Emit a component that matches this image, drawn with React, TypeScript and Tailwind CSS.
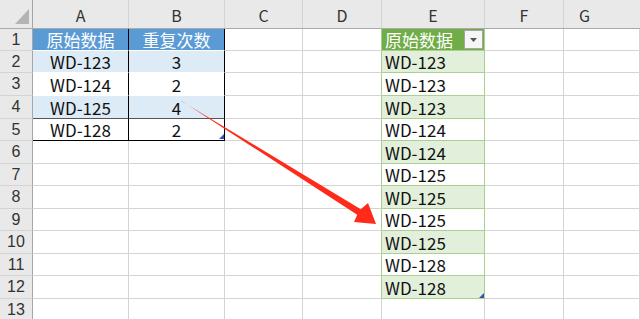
import type { ReactNode } from "react";

type Cell = {
  w: string;
  bg?: string;
  br: string;
  bb: string;
  align?: string;
  text?: string;
  children?: ReactNode;
};

const ROW_H = [
  "h-[22px]", "h-[22px]", "h-[23px]", "h-[23px]", "h-[22px]", "h-[23px]",
  "h-[22px]", "h-[23px]", "h-[22px]", "h-[23px]", "h-[22px]", "h-[23px]", "h-[22px]",
];

const GRID = "border-r-[#d4d4d4]";
const GRID_B = "border-b-[#d4d4d4]";

const summary: [string, string][] = [
  ["原始数据", "重复次数"],
  ["WD-123", "3"],
  ["WD-124", "2"],
  ["WD-125", "4"],
  ["WD-128", "2"],
];

const source = [
  "WD-123", "WD-123", "WD-123", "WD-124", "WD-124", "WD-125",
  "WD-125", "WD-125", "WD-125", "WD-128", "WD-128",
];

function GridCell({ w, bg = "bg-white", br, bb, align = "justify-center", text = "text-[#111]", children }: Cell) {
  return (
    <div className={`${w} ${bg} ${br} ${bb} ${align} ${text} shrink-0 border-r border-b flex items-center leading-none text-[17px] overflow-hidden whitespace-nowrap`}>
      {children}
    </div>
  );
}

function FilterButton() {
  return (
    <div className="ml-auto mr-[1px] w-[19px] h-[19px] bg-[#f6f6f6] border border-[#a6a6a6] flex items-center justify-center">
      <svg width="7" height="4" viewBox="0 0 7 4">
        <path d="M0 0h7L3.5 4z" fill="#555" />
      </svg>
    </div>
  );
}

function SheetRow({ r }: { r: number }) {
  const inTable = r <= 5;
  const inList = r <= 12;
  const green = r === 1 ? "bg-[#70ad47]" : r % 2 === 0 ? "bg-[#e2efda]" : "bg-white";
  const blue = r === 1 ? "bg-[#5b9bd5]" : r % 2 === 0 ? "bg-[#ddebf7]" : "bg-white";
  const tableBottom = r === 5 ? "border-b-black" : r === 4 ? "border-b-[#555]" : "border-b-white";
  const head = r === 1 ? "text-white" : "text-[#111]";

  return (
    <div className={`${ROW_H[r - 1]} flex`}>
      <div className="w-[33px] shrink-0 bg-[#e9e9e9] border-r border-b border-r-[#a6a6a6] border-b-[#d4d4d4] flex items-center justify-center text-[16px] leading-none text-[#333] font-['Liberation_Sans',sans-serif]">
        {r}
      </div>
      {inTable ? (
        <>
          <GridCell w="w-[96px]" bg={blue} br="border-r-black" bb={tableBottom} text={head}>
            {summary[r - 1][0]}
          </GridCell>
          <GridCell w="w-[96px]" bg={blue} br="border-r-black" bb={tableBottom} text={head}>
            {summary[r - 1][1]}
          </GridCell>
        </>
      ) : (
        <>
          <GridCell w="w-[96px]" br={GRID} bb={GRID_B} />
          <GridCell w="w-[96px]" br={GRID} bb={GRID_B} />
        </>
      )}
      <GridCell w="w-[78px]" br={GRID} bb={GRID_B} />
      <GridCell w="w-[79px]" br={inList ? "border-r-[#a9d08e]" : GRID} bb={GRID_B} />
      {inList ? (
        <GridCell
          w="w-[103px]"
          bg={green}
          br="border-r-[#a9d08e]"
          bb="border-b-[#a9d08e]"
          align="justify-start pl-[3px]"
          text={head}
        >
          {r === 1 ? "原始数据" : source[r - 2]}
          {r === 1 && <FilterButton />}
        </GridCell>
      ) : (
        <GridCell w="w-[103px]" br={GRID} bb={GRID_B} />
      )}
      <GridCell w="w-[79px]" br={GRID} bb={GRID_B} />
      <GridCell w="flex-1" br={GRID} bb={GRID_B} />
    </div>
  );
}

export default function App() {
  const cols = [
    { label: "A", w: "w-[96px]" },
    { label: "B", w: "w-[96px]" },
    { label: "C", w: "w-[78px]" },
    { label: "D", w: "w-[79px]" },
    { label: "E", w: "w-[103px]" },
    { label: "F", w: "w-[79px]" },
  ];

  return (
    <div className="relative w-[640px] h-[319px] overflow-hidden bg-white font-['Noto_Sans_CJK_SC',sans-serif]">
      {/* column letters */}
      <div className="h-[29px] flex bg-[#e9e9e9] border-b border-b-[#ababab]">
        <div className="w-[33px] shrink-0 border-r border-r-[#a6a6a6] flex items-end justify-end pr-[3px] pb-[4px]">
          <svg width="14" height="15" viewBox="0 0 14 15">
            <path d="M14 0v15H0z" fill="#b4b4b4" />
          </svg>
        </div>
        {cols.map((c) => (
          <div
            key={c.label}
            className={`${c.w} shrink-0 border-r border-r-[#d4d4d4] flex items-center justify-center pt-[2px] text-[16px] leading-none text-[#333]`}
          >
            {c.label}
          </div>
        ))}
        <div className="flex-1 flex items-center justify-center pt-[2px] text-[16px] leading-none text-[#333] pr-[35px]">G</div>
      </div>

      {Array.from({ length: 13 }, (_, i) => (
        <SheetRow key={i} r={i + 1} />
      ))}

      {/* arrow and table resize handles */}
      <svg className="absolute inset-0 pointer-events-none" width="640" height="319" viewBox="0 0 640 319">
        <polygon
          points="181,100.6 357.2,214.7 354,222 376,224 368,203 360.8,209.3 181.7,101.2"
          fill="#ff2a1a"
        />
        <path d="M224 134v5h-5z" fill="#3553b0" />
        <path d="M484 293v5h-5z" fill="#3553b0" />
      </svg>
    </div>
  );
}
